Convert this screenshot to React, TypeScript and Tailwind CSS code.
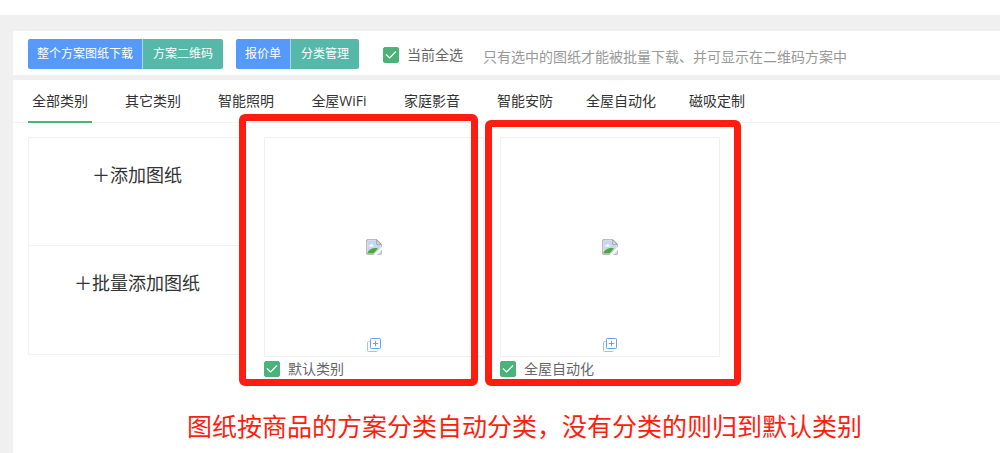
import React, { useState } from 'react'

const categories = [
  '全部类别',
  '其它类别',
  '智能照明',
  '全屋WiFi',
  '家庭影音',
  '智能安防',
  '全屋自动化',
  '磁吸定制',
]

interface Drawing {
  name: string
  frame: string
}

const drawings: Drawing[] = [
  { name: '默认类别', frame: '-left-[25px] -top-[23px] h-[272px] w-[239px]' },
  { name: '全屋自动化', frame: '-left-[15px] -top-[17px] h-[266px] w-[256px]' },
]

interface ButtonGroupProps {
  first: string
  second: string
}

function ButtonGroup({ first, second }: ButtonGroupProps) {
  return (
    <div className="flex h-[30px] overflow-hidden rounded-xs text-xs text-white">
      <button type="button" className="bg-[#5599fb] px-[9px]">
        {first}
      </button>
      <button type="button" className="border-l border-[#a9d8ee] bg-[#56b8a9] px-2.5">
        {second}
      </button>
    </div>
  )
}

interface CheckProps {
  label: string
  className?: string
}

function Check({ label, className = '' }: CheckProps) {
  return (
    <label className={`flex gap-2 text-sm leading-4 text-[#666] ${className}`}>
      <span className="relative size-4 shrink-0">
        <input
          type="checkbox"
          defaultChecked
          className="peer block size-4 appearance-none rounded-xs border border-[#4bb27a] checked:bg-[#4bb27a]"
        />
        <svg
          viewBox="0 0 16 16"
          className="pointer-events-none absolute inset-0 hidden size-4 peer-checked:block"
          fill="none"
          stroke="#fff"
          strokeWidth="1.2"
        >
          <path d="M3 7.5 L6.6 11 L13 4.5" />
        </svg>
      </span>
      {label}
    </label>
  )
}

function MissingImage() {
  return (
    <svg viewBox="0 0 16 16" className="size-4" role="img" aria-label="图纸">
      <path d="M1 1 H11 L15 5 V15 H1 Z" fill="#f4f6fa" />
      <path d="M2 2 H10.5 V5.5 H14 V14 H2 Z" fill="#c3d6f5" />
      <path d="M3 7.5 a1.4 1.4 0 0 1 1.4-1.6 a1.8 1.8 0 0 1 3.2 0.5 a1 1 0 0 1 0 1.1 Z" fill="#fff" />
      <path d="M1.5 14.6 V13.5 C4 10 7.5 8.2 12 9.6 L7.5 14.6 Z" fill="#4da83a" />
      <path d="M0.8 15.2 V0.8 H11 L15.2 5 V15.2 Z" fill="none" stroke="#a0a0a0" />
      <path d="M10.7 1 V5.3 H15 Z" fill="#e4e4e4" stroke="#909090" strokeWidth="0.8" />
      <path d="M16 7.5 L7.5 16 H10.8 L16 10.8 Z" fill="#fff" />
    </svg>
  )
}

function CopyIcon() {
  return (
    <svg viewBox="0 0 14 14" className="size-3.5" fill="none">
      <path d="M2.5 3.5 H1.5 Q0.5 3.5 0.5 4.5 V12.5 Q0.5 13.5 1.5 13.5 H9.5 Q10.5 13.5 10.5 12.5" stroke="#9cc3f3" />
      <rect x="3.5" y="0.5" width="10" height="10" rx="0.8" stroke="#65a3ee" />
      <path d="M8.5 2.8 V8.2 M5.8 5.5 H11.2" stroke="#65a3ee" />
    </svg>
  )
}

function DrawingCard({ name, frame }: Drawing) {
  return (
    <article className="relative w-[220px]">
      <div className="flex h-[220px] flex-col items-center justify-between border border-[#f1f1f1] pt-[101px] pb-1">
        <MissingImage />
        <button type="button" aria-label="复制">
          <CopyIcon />
        </button>
      </div>
      <Check label={name} className="mt-1" />
      {/* Highlight frame */}
      <div
        className={`pointer-events-none absolute rounded-md border-[7px] border-[#ff1d10] ${frame}`}
      />
    </article>
  )
}

export default function App() {
  const [active, setActive] = useState(categories[0])

  return (
    <div className="flex min-h-screen flex-col bg-[#f0f0f0] font-['Open_Sans','Noto_Sans_CJK_SC',sans-serif]">
      <div className="h-[15px] bg-white" />

      {/* Toolbar */}
      <header className="mt-4 ml-[13px] flex h-11 items-start bg-white pt-2 pl-[15px]">
        <ButtonGroup first="整个方案图纸下载" second="方案二维码" />
        <div className="ml-[13px]">
          <ButtonGroup first="报价单" second="分类管理" />
        </div>
        <Check label="当前全选" className="mt-2 ml-6" />
        <p className="mt-2 ml-5 text-sm text-[#999]">
          只有选中的图纸才能被批量下载、并可显示在二维码方案中
        </p>
      </header>

      <main className="mt-[5px] ml-[13px] flex-1 bg-white">
        {/* Category tabs */}
        <nav className="flex h-[43px] gap-[29px] border-b border-[#f3f3f3] pl-[15px] text-sm text-[#333]">
          {categories.map((category) => (
            <button
              key={category}
              type="button"
              onClick={() => setActive(category)}
              className={`-mb-px min-w-16 border-b-2 text-center ${
                active === category ? 'border-[#4bb27a]' : 'border-transparent'
              }`}
            >
              {category}
            </button>
          ))}
        </nav>

        <section className="flex gap-4 pt-3.5 pl-[15px]">
          <div className="w-[220px] text-lg text-[#333]">
            <button
              type="button"
              className="block h-[109px] w-[218px] border border-[#f1f1f1] pb-[34px]"
            >
              ＋添加图纸
            </button>
            <button
              type="button"
              className="block h-[109px] w-[218px] border border-t-0 border-[#f1f1f1] pb-[34px]"
            >
              ＋批量添加图纸
            </button>
          </div>
          {drawings.map((drawing) => (
            <DrawingCard key={drawing.name} {...drawing} />
          ))}
        </section>

        <p className="mt-[31px] pl-[174px] text-[25px] leading-9 text-[#ff1d10]">
          图纸按商品的方案分类自动分类，没有分类的则归到默认类别
        </p>
      </main>
    </div>
  )
}
